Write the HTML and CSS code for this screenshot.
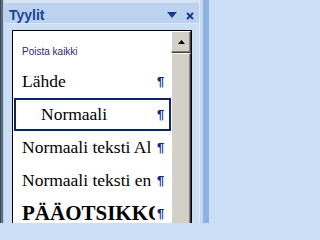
FILE: index.html
```html
<!DOCTYPE html>
<html lang="fi">
<head>
<meta charset="utf-8">
<title>Tyylit</title>
<link rel="stylesheet" href="styles.css">
</head>
<body>
<div class="window">
  <div class="edge-left"></div>
  <div class="pane">
    <div class="top-strip"></div>
    <div class="titlebar">
      <span class="title">Tyylit</span>
      <svg class="ico-drop" width="10" height="6" viewBox="0 0 10 6"><polygon points="0,0 10,0 5,6" fill="#16398a"/></svg>
      <svg class="ico-close" width="8" height="8" viewBox="0 0 8 8"><path d="M1 1 L7 7 M7 1 L1 7" stroke="#16398a" stroke-width="1.9" fill="none"/></svg>
    </div>
    <div class="title-sep"></div>
    <div class="body">
      <div class="listbox">
        <div class="list">
          <div class="clear-row">Poista kaikki</div>
          <div class="row"><span class="name">Lähde</span><span class="mark">¶</span></div>
          <div class="row selected"><span class="name indent">Normaali</span><span class="mark">¶</span></div>
          <div class="row"><span class="name">Normaali teksti Al</span><span class="mark">¶</span></div>
          <div class="row"><span class="name">Normaali teksti en</span><span class="mark">¶</span></div>
          <div class="row"><span class="name heading">PÄÄOTSIKKO</span><span class="mark">¶</span></div>
        </div>
        <div class="scrollbar">
          <div class="sb-btn"><svg width="7" height="4" viewBox="0 0 7 4"><polygon points="3.5,0 7,4 0,4" fill="#000"/></svg></div>
          <div class="sb-thumb"></div>
        </div>
      </div>
    </div>
  </div>
  <div class="edge-right"></div>
</div>
</body>
</html>
```
FILE: styles.css
```css
html, body {
  margin: 0;
  padding: 0;
  background: #cadef6;
}
.window {
  width: 209px;
  height: 223px;
  overflow: hidden;
  display: flex;
}
.edge-left {
  width: 4px;
  flex: none;
  background: linear-gradient(to right, #3d4857 0 1px, #5f6e82 1px 3px, #b8cbe2 3px 4px);
}
.edge-right {
  width: 10px;
  flex: none;
  background: linear-gradient(to right, #dfeafa 0 1px, #c5d9f4 1px 4px, #90b2e3 4px 10px);
}
.pane {
  flex: 1;
  min-width: 0;
  display: flex;
  flex-direction: column;
}
.top-strip {
  height: 3px;
  background: #d9e4f2;
  flex: none;
}
.titlebar {
  height: 20px;
  flex: none;
  background: #bcd2ef;
  display: flex;
  align-items: flex-start;
  padding-left: 5px;
  padding-right: 5px;
}
.title {
  font-family: "Liberation Sans", Arial, sans-serif;
  font-weight: bold;
  font-size: 14px;
  line-height: 16px;
  margin-top: 4px;
  color: #1c4595;
}
.ico-drop {
  margin-left: auto;
  margin-top: 9px;
  display: block;
}
.ico-close {
  margin-left: 9px;
  margin-top: 9px;
  display: block;
}
.title-sep {
  height: 1px;
  flex: none;
  background: #dde9f9;
}
.body {
  flex: 1;
  min-height: 0;
  overflow: hidden;
  background: #cadef6;
  padding: 6px 7px 0 8px;
}
.listbox {
  border: 1px solid #000;
  background: #fff;
  display: flex;
  height: 300px;
}
.list {
  flex: 1;
  min-width: 0;
}
.clear-row {
  height: 34px;
  box-sizing: border-box;
  padding: 6px 0 0 9px;
  display: flex;
  align-items: center;
  font-family: "Liberation Sans", Arial, sans-serif;
  font-size: 10px;
  color: #2a2a6a;
}
.row {
  height: 33px;
  box-sizing: border-box;
  margin-left: 1px;
  border: 2px solid transparent;
  padding: 0 4px 0 6px;
  display: flex;
  align-items: center;
}
.row.selected {
  border-color: #0a2464;
}
.name {
  flex: 1;
  min-width: 0;
  overflow: hidden;
  white-space: nowrap;
  font-family: "Liberation Serif", "Times New Roman", serif;
  font-size: 17.5px;
  color: #000;
}
.name.indent {
  padding-left: 19px;
}
.name.heading {
  font-weight: bold;
  font-size: 21px;
}
.mark {
  flex: none;
  width: 8px;
  margin-left: 2px;
  font-family: "Liberation Sans", Arial, sans-serif;
  font-weight: bold;
  font-size: 13px;
  line-height: 14px;
  color: #0c2a8c;
}
.scrollbar {
  width: 20px;
  flex: none;
  display: flex;
  flex-direction: column;
}
.sb-btn {
  height: 22px;
  box-sizing: border-box;
  background: #d4d0c8;
  border: 1px solid;
  border-color: #fff #404040 #404040 #fff;
  box-shadow: inset -1px -1px 0 #808080;
  display: flex;
  align-items: center;
  justify-content: center;
}
.sb-btn svg {
  display: block;
}
.sb-thumb {
  flex: 1;
  background: #d4d0c8;
  border-left: 1px solid #fff;
  border-top: 1px solid #fff;
  border-right: 1px solid #404040;
  box-shadow: inset -1px 0 0 #808080;
}
```
